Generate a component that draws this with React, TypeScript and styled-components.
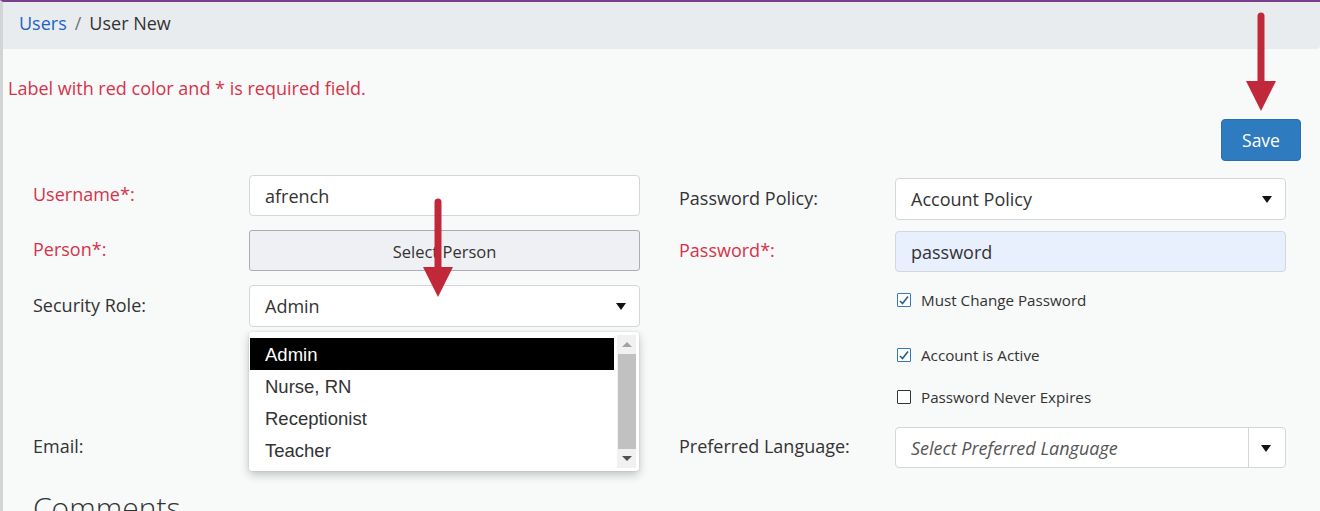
import React from "react";
import styled, { createGlobalStyle } from "styled-components";

const Global = createGlobalStyle`
  html, body { margin: 0; padding: 0; background: #f8f9f9; }
  body { font-family: "Open Sans", "Noto Sans", sans-serif; color: #333; }
  * { box-sizing: border-box; }
`;

const Page = styled.div`
  position: relative;
  width: 1320px;
  height: 511px;
  overflow: hidden;
  border-top: 2px solid #7a3f8a;
  border-left: 3px solid #d2d4d6;
  background: #f8f9f9;
`;

const Breadcrumb = styled.nav`
  height: 47px;
  background: #e9ecef;
  border-bottom-right-radius: 4px;
  display: flex;
  align-items: center;
  padding: 0 0 6px 16px;
  font-size: 18px;
  color: #333;
`;

const Crumb = styled.a`
  color: #1f63c4;
  text-decoration: none;
`;

const Sep = styled.span`
  color: #6c757d;
  padding: 0 8px;
`;

const Content = styled.div`
  padding: 0 19px 0 5px;
`;

const Notice = styled.p`
  margin: 27px 0 0;
  font-size: 18px;
  line-height: 24px;
  color: #d6334a;
`;

const Toolbar = styled.div`
  display: flex;
  justify-content: flex-end;
  margin-top: 19px;
`;

const SaveButton = styled.button`
  width: 80px;
  height: 42px;
  border: 1px solid #2a6fad;
  border-radius: 4px;
  background: #2f7bbf;
  color: #fff;
  font-family: inherit;
  font-size: 17.5px;
`;

const Form = styled.div`
  display: grid;
  grid-template-columns: 607px 607px;
  column-gap: 39px;
  padding: 0 15px 0 25px;
  margin-top: 14px;
  align-items: start;
`;

const Column = styled.div<{ $offset?: number }>`
  display: flex;
  flex-direction: column;
  padding-top: ${(p) => p.$offset ?? 0}px;
`;

const Row = styled.div<{ $mt?: number; $h?: number }>`
  display: grid;
  grid-template-columns: 216px 1fr;
  align-items: center;
  margin-top: ${(p) => p.$mt ?? 0}px;
  min-height: ${(p) => p.$h ?? 41}px;
  position: relative;
`;

const Label = styled.label<{ $required?: boolean }>`
  font-size: 18px;
  color: ${(p) => (p.$required ? "#d6334a" : "#333")};
  margin-top: -3px;
`;

const FieldBox = styled.div<{ $fill?: string; $h?: number }>`
  position: relative;
  height: ${(p) => p.$h ?? 41}px;
  border: 1px solid #d3d7db;
  border-radius: 4px;
  background: ${(p) => p.$fill ?? "#fff"};
  display: flex;
  align-items: center;
  padding: 0 15px;
  font-size: 18px;
  color: #333;
`;

const PlaceholderText = styled.span`
  font-style: italic;
  color: #555;
  flex: 1;
`;

const PersonButton = styled.button`
  height: 41px;
  width: 100%;
  border: 1px solid #a9aeb4;
  border-radius: 3px;
  background: #eef0f3;
  font-family: inherit;
  font-size: 16.5px;
  color: #333;
  padding-top: 2px;
`;

const Caret = styled.span<{ $right?: number }>`
  position: absolute;
  right: ${(p) => p.$right ?? 13}px;
  top: 50%;
  margin-top: -3px;
  width: 0;
  height: 0;
  border-left: 5px solid transparent;
  border-right: 5px solid transparent;
  border-top: 7px solid #111;
`;

const Divider = styled.span`
  position: absolute;
  right: 36px;
  top: 0;
  bottom: 0;
  width: 1px;
  background: #d3d7db;
`;

const Popup = styled.div`
  position: absolute;
  left: 216px;
  top: 47px;
  width: 390px;
  height: 139px;
  background: #fff;
  border-radius: 3px;
  box-shadow: 0 4px 10px rgba(0, 0, 0, 0.22), 0 0 2px rgba(0, 0, 0, 0.15);
  padding: 6px 25px 0 1px;
  z-index: 5;
  font-family: "Liberation Sans", Arial, sans-serif;
`;

const Option = styled.div<{ $selected?: boolean }>`
  height: 32px;
  display: flex;
  align-items: center;
  padding: 1px 0 0 15px;
  font-size: 18.5px;
  color: ${(p) => (p.$selected ? "#fff" : "#333")};
  background: ${(p) => (p.$selected ? "#000" : "transparent")};
`;

const ScrollTrack = styled.div`
  position: absolute;
  right: 3px;
  top: 3px;
  bottom: 3px;
  width: 19px;
  background: #f1f1f1;
  display: flex;
  flex-direction: column;
  align-items: center;
`;

const ScrollArrow = styled.span<{ $up?: boolean }>`
  width: 0;
  height: 0;
  margin: 7px 0;
  border-left: 5px solid transparent;
  border-right: 5px solid transparent;
  ${(p) => (p.$up ? "border-bottom: 5px solid #a3a3a3;" : "border-top: 5px solid #505050;")}
`;

const ScrollThumb = styled.div`
  flex: 1;
  width: 18px;
  background: #c1c1c1;
`;

const CheckRow = styled.div<{ $mt: number }>`
  display: flex;
  align-items: center;
  gap: 10px;
  height: 20px;
  margin: ${(p) => p.$mt}px 0 0 218px;
  font-size: 15.2px;
  color: #333;
`;

const Box = styled.span<{ $checked?: boolean }>`
  width: 14px;
  height: 14px;
  border: 1.5px solid ${(p) => (p.$checked ? "#3579bd" : "#333")};
  background: #fff;
  border-radius: 1px;
  display: flex;
  align-items: center;
  justify-content: center;
`;

const Comments = styled.h2`
  margin: 21px 0 0 25px;
  font-size: 30px;
  font-weight: 300;
  line-height: 38px;
  color: #333;
`;

const ArrowSvg = styled.svg<{ $x: number; $y: number }>`
  position: absolute;
  left: ${(p) => p.$x}px;
  top: ${(p) => p.$y}px;
  z-index: 10;
  pointer-events: none;
`;

const RedArrow = ({ x, y }: { x: number; y: number }) => (
  <ArrowSvg $x={x} $y={y} width="32" height="100" viewBox="0 0 32 100">
    <line x1="16" y1="4" x2="16" y2="72" stroke="#c1293b" strokeWidth="7" strokeLinecap="round" />
    <polygon points="1,69 31,69 16,99" fill="#c1293b" />
  </ArrowSvg>
);

const Check = ({ checked }: { checked?: boolean }) => (
  <Box $checked={checked}>
    {checked && (
      <svg width="10" height="10" viewBox="0 0 10 10">
        <path d="M1 6 L3.5 8.5 L9 1.5" fill="none" stroke="#2a5d97" strokeWidth="1.6" />
      </svg>
    )}
  </Box>
);

export default function App() {
  return (
    <>
      <Global />
      <Page>
        <Breadcrumb>
          <Crumb href="#">Users</Crumb>
          <Sep>/</Sep>
          <span>User New</span>
        </Breadcrumb>
        <Content>
          <Notice>Label with red color and * is required field.</Notice>
          <Toolbar>
            <SaveButton>Save</SaveButton>
          </Toolbar>
          <Form>
            <Column>
              <Row>
                <Label $required>Username*:</Label>
                <FieldBox>afrench</FieldBox>
              </Row>
              <Row $mt={14}>
                <Label $required>Person*:</Label>
                <PersonButton>Select Person</PersonButton>
              </Row>
              <Row $mt={14} $h={42}>
                <Label>Security Role:</Label>
                <FieldBox $h={42}>
                  Admin
                  <Caret />
                </FieldBox>
                <Popup>
                  <Option $selected>Admin</Option>
                  <Option>Nurse, RN</Option>
                  <Option>Receptionist</Option>
                  <Option>Teacher</Option>
                  <ScrollTrack>
                    <ScrollArrow $up />
                    <ScrollThumb />
                    <ScrollArrow />
                  </ScrollTrack>
                </Popup>
              </Row>
              <Row $mt={100}>
                <Label>Email:</Label>
                <div />
              </Row>
            </Column>
            <Column $offset={3}>
              <Row $h={42}>
                <Label>Password Policy:</Label>
                <FieldBox $h={42}>
                  Account Policy
                  <Caret />
                </FieldBox>
              </Row>
              <Row $mt={11}>
                <Label $required>Password*:</Label>
                <FieldBox $fill="#e8f0fe">password</FieldBox>
              </Row>
              <CheckRow $mt={18}>
                <Check checked />
                Must Change Password
              </CheckRow>
              <CheckRow $mt={35}>
                <Check checked />
                Account is Active
              </CheckRow>
              <CheckRow $mt={22}>
                <Check />
                Password Never Expires
              </CheckRow>
              <Row $mt={20}>
                <Label>Preferred Language:</Label>
                <FieldBox>
                  <PlaceholderText>Select Preferred Language</PlaceholderText>
                  <Divider />
                  <Caret $right={14} />
                </FieldBox>
              </Row>
            </Column>
          </Form>
          <Comments>Comments</Comments>
        </Content>
        <RedArrow x={1242} y={10} />
        <RedArrow x={419} y={196} />
      </Page>
    </>
  );
}
